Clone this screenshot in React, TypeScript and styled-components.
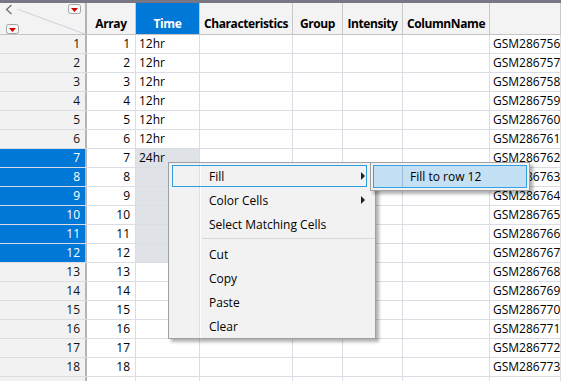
import React from 'react';
import styled, { createGlobalStyle } from 'styled-components';

const GlobalStyle = createGlobalStyle`
  html, body { margin: 0; padding: 0; background: #fff; }
  body {
    font-family: "Open Sans", "Noto Sans", sans-serif;
    font-size: 12px;
    color: #000;
  }
`;

const COLS = '87px 49px 64px 93px 50px 60px 87px 1fr';

const Sheet = styled.div`
  position: relative;
  width: 561px;
  height: 381px;
  overflow: hidden;
  border-top: 3px solid #767685;
  box-sizing: border-box;
`;

const HeaderRow = styled.div`
  display: grid;
  grid-template-columns: ${COLS};
  height: 31px;
  background: #f3f3f3;
  border-bottom: 1px solid #c4c4c4;
`;

const Corner = styled.div`
  border-right: 2px solid #b4b4b4;
  box-sizing: border-box;
  line-height: 0;
`;

const HeaderCell = styled.div<{ $active?: boolean }>`
  display: flex;
  align-items: flex-end;
  justify-content: center;
  padding-bottom: 2px;
  box-sizing: border-box;
  border-right: 1px solid #c8c8c8;
  font-weight: 700;
  letter-spacing: -0.4px;
  white-space: nowrap;
  overflow: hidden;
  background: ${(p) => (p.$active ? '#0078d7' : 'transparent')};
  color: ${(p) => (p.$active ? '#fff' : '#000')};
`;

const Row = styled.div`
  display: grid;
  grid-template-columns: ${COLS};
  height: 18px;
  line-height: 18px;
  border-bottom: 1px solid #dcdce4;
`;

const RowNum = styled.div<{ $selected?: boolean }>`
  text-align: right;
  padding-right: 5px;
  box-sizing: border-box;
  border-right: 2px solid #b4b4b4;
  background: ${(p) => (p.$selected ? '#0078d7' : '#f2f2f2')};
  color: ${(p) => (p.$selected ? '#fff' : '#111')};
`;

const Cell = styled.div<{ $align?: 'left' | 'right'; $shaded?: boolean }>`
  box-sizing: border-box;
  border-right: 1px solid #dcdce4;
  white-space: nowrap;
  overflow: hidden;
  text-align: ${(p) => p.$align ?? 'left'};
  padding: ${(p) => (p.$align === 'right' ? '0 5px 0 0' : '0 0 0 3px')};
  background: ${(p) => (p.$shaded ? '#dfe3e8' : '#fff')};
`;

const Menu = styled.div`
  position: absolute;
  left: 168px;
  top: 159px;
  width: 208px;
  display: flex;
  flex-direction: column;
  box-sizing: border-box;
  padding-top: 1px;
  background-color: #f2f2f2;
  background-image: linear-gradient(
    to right,
    transparent 30px,
    #e0e0e0 30px,
    #e0e0e0 31px,
    #fdfdfd 31px,
    #fdfdfd 32px,
    transparent 32px
  );
  border: 1px solid #a0a0a0;
  box-shadow: 3px 3px 3px rgba(0, 0, 0, 0.3);
`;

const MenuItem = styled.div<{ $hot?: boolean }>`
  display: flex;
  align-items: center;
  height: 22px;
  margin: 1px 8px 1px 3px;
  padding-left: 36px;
  box-sizing: border-box;
  border: 1px solid ${(p) => (p.$hot ? '#2b9de0' : 'transparent')};
  white-space: nowrap;
`;

const Arrow = styled.span`
  margin-left: auto;
  margin-right: 1px;
  width: 0;
  height: 0;
  border-left: 4px solid #222;
  border-top: 4px solid transparent;
  border-bottom: 4px solid transparent;
`;

const Separator = styled.div`
  height: 1px;
  margin: 2px 0 3px 33px;
  background: #d7d7d7;
`;

const SubMenu = styled.div`
  position: absolute;
  left: 370px;
  top: 159px;
  width: 160px;
  box-sizing: border-box;
  padding: 2px;
  background: #f2f2f2;
  border: 1px solid #a0a0a0;
  box-shadow: 3px 3px 3px rgba(0, 0, 0, 0.3);
`;

const SubItem = styled.div`
  display: flex;
  align-items: center;
  height: 23px;
  padding-left: 36px;
  box-sizing: border-box;
  border: 1px solid #35a0e2;
  background-color: #c4e0f5;
  background-image: linear-gradient(
    to right,
    transparent 28px,
    #9fbcd4 28px,
    #9fbcd4 29px,
    transparent 29px
  );
  white-space: nowrap;
`;

const Dropdown = ({ x, y }: { x: number; y: number }) => (
  <g>
    <rect x={x + 0.5} y={y + 0.5} width={12} height={9} rx={2} fill="#f7f7f7" stroke="#a4a4a4" />
    <path d={`M${x + 3} ${y + 4} L${x + 10} ${y + 4} L${x + 6.5} ${y + 8} Z`} fill="#cc0000" />
  </g>
);

const CornerIcon = () => (
  <svg width="85" height="31" viewBox="0 3 85 31">
    <path d="M11.5 5 L6.5 9.5 L11.5 14" fill="none" stroke="#6a6a6a" strokeWidth="1.2" />
    <line x1="17" y1="9" x2="85" y2="34" stroke="#cfd0dc" strokeWidth="1" />
    <Dropdown x={68} y={4} />
    <Dropdown x={6} y={24} />
  </svg>
);

const headers = ['Array', 'Time', 'Characteristics', 'Group', 'Intensity', 'ColumnName', ''];

const rows = Array.from({ length: 19 }, (_, i) => i + 1);

const timeFor = (n: number) => (n <= 6 ? '12hr' : n === 7 ? '24hr' : '');

const App: React.FC = () => {
  return (
    <>
      <GlobalStyle />
      <Sheet>
        <HeaderRow>
          <Corner>
            <CornerIcon />
          </Corner>
          {headers.map((h, i) => (
            <HeaderCell key={i} $active={h === 'Time'}>
              {h}
            </HeaderCell>
          ))}
        </HeaderRow>
        {rows.map((n) => {
          const selected = n >= 7 && n <= 12;
          // the 19th row only peeks in below the window edge
          const shown = n <= 18;
          return (
            <Row key={n}>
              <RowNum $selected={selected}>{shown ? n : ''}</RowNum>
              <Cell $align="right">{shown ? n : ''}</Cell>
              <Cell $shaded={selected}>{timeFor(n)}</Cell>
              <Cell />
              <Cell />
              <Cell />
              <Cell />
              <Cell>{shown ? `GSM${286755 + n}` : ''}</Cell>
            </Row>
          );
        })}

        <Menu>
          <MenuItem $hot>
            Fill
            <Arrow />
          </MenuItem>
          <MenuItem>
            Color Cells
            <Arrow />
          </MenuItem>
          <MenuItem>Select Matching Cells</MenuItem>
          <Separator />
          <MenuItem>Cut</MenuItem>
          <MenuItem>Copy</MenuItem>
          <MenuItem>Paste</MenuItem>
          <MenuItem>Clear</MenuItem>
        </Menu>

        <SubMenu>
          <SubItem>Fill to row 12</SubItem>
        </SubMenu>
      </Sheet>
    </>
  );
};

export default App;
